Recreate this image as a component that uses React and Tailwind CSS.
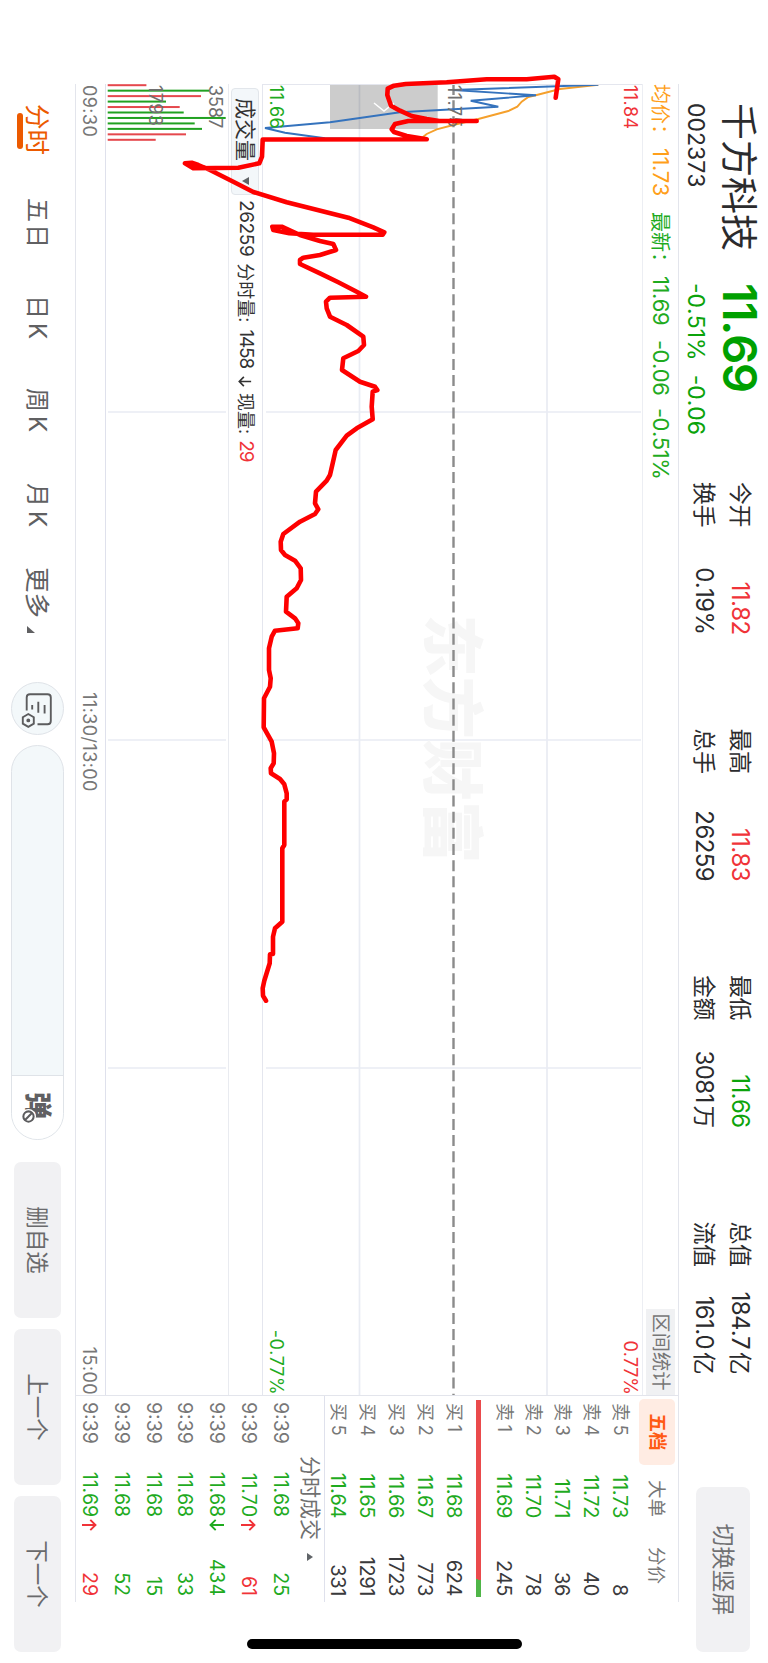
const stats = [
  [["今开", "11.82", "text-[#f03338]"], ["换手", "0.19%", ""]],
  [["最高", "11.83", "text-[#f03338]"], ["总手", "26259", ""]],
  [["最低", "11.66", "text-[#0ba30b]"], ["金额", "3081", "", "万"]],
  [["总值", "184.7", "", "亿"], ["流值", "161.0", "", "亿"]],
];

const sells = [
  ["卖 5", "11.73", 8],
  ["卖 4", "11.72", 40],
  ["卖 3", "11.71", 36],
  ["卖 2", "11.70", 78],
  ["卖 1", "11.69", 245],
];

const buys = [
  ["买 1", "11.68", 624],
  ["买 2", "11.67", 773],
  ["买 3", "11.66", 1723],
  ["买 4", "11.65", 1291],
  ["买 5", "11.64", 331],
];

const trades = [
  { price: "11.68", qty: 25 },
  { price: "11.70", arrow: "up", qty: 61, red: true },
  { price: "11.68", arrow: "down", qty: 434 },
  { price: "11.68", qty: 33 },
  { price: "11.68", qty: 15 },
  { price: "11.68", qty: 52 },
  { price: "11.69", arrow: "up", qty: 29, red: true },
];

// [height, isUp]
const volumes = [
  [38.7, true], [101.7, false], [93.3, true], [58.3, false],
  [72, true], [76, false], [118, false], [87, false],
  [94.3, false], [78.3, true], [48, true],
];

// every point is [distance from screen bottom, distance from screen left]
const priceLine = [
  [598.3, 84.7], [453.3, 90], [536, 95.3], [470.7, 100.7], [498.3, 106.7],
  [400, 112.3], [330, 122.3], [265, 128], [285, 132.7], [325, 138.3], [422, 140],
];

const avgLine = [
  [598.3, 84.7], [560, 89], [536.7, 95], [528.3, 97], [521.7, 101.7],
  [517.3, 106.7], [508.3, 111], [478.3, 119], [453.3, 125], [436.7, 129.3],
  [426.7, 134], [422.7, 137.3],
];

const sketch = [
  [555.7, 97.7], [558.3, 79.3], [554.3, 76.7], [526.7, 79.3], [486.7, 79.3],
  [446.7, 82.3], [405.7, 84], [394, 85.7], [387.7, 88.7], [387.3, 95],
  [391, 105.7], [400, 110.7], [411.7, 116], [426.7, 119], [439.3, 121],
  [476.7, 121], [408.3, 121], [395, 124], [391.7, 129.3], [394, 132],
  [406.7, 136], [426.7, 139.3], [262.7, 139.5], [262, 156.7], [259.3, 163.3],
  [238.3, 167.7], [193.3, 168.3], [185, 163.3], [191.7, 162.7], [198.3, 165],
  [210, 170], [233.3, 181.7], [253.3, 192], [286.7, 202.3], [348.3, 217.7],
  [373.3, 227.3], [384.3, 232.3], [382.7, 234.7], [313.3, 234.7], [289.3, 233.3],
  [273.3, 230], [272.3, 226.7], [281.7, 226.7], [300, 235], [320, 241],
  [333.3, 244], [336, 250], [320, 255], [303.3, 257.7], [300, 260],
  [300, 264], [320, 273.3], [338.3, 282.3], [356.7, 291.7], [366, 296.7],
  [330, 297.7], [326, 301.7], [326.7, 308.3], [330, 316.7], [346.7, 325],
  [363.3, 336.7], [364, 345], [358.3, 351], [343.3, 358.3], [342, 370],
  [360, 381.7], [375, 386.7], [377.3, 390], [372.7, 391.7], [371.7, 406.7],
  [372.7, 419.3], [356.7, 428.3], [346.7, 435.7], [335.7, 450], [332.7, 463.3],
  [330, 475], [326.7, 480.7], [316, 491.7], [315, 503.3], [318.3, 509.3],
  [315, 514], [300, 521.7], [283.3, 534], [280.7, 541.7], [281, 550],
  [285, 555], [295, 560.7], [300.7, 568.3], [301, 580], [296.7, 588.3],
  [286.7, 596.7], [286, 611.7], [295, 618.3], [298.3, 623.3], [297.7, 628.3],
  [275, 630.7], [271.7, 636.7], [269, 648.3], [269, 670], [270.7, 678.3],
  [270, 686.7], [264, 698.3], [263.7, 727.3], [271.7, 741.7], [274, 753.3],
  [273.7, 763.3], [270.7, 768.3], [271, 773.3], [280, 779], [284.3, 784.3],
  [286.7, 793.3], [286.7, 799.3], [284.3, 801.7], [284.3, 845], [282.3, 848.3],
  [282.3, 921.7], [275, 928.3], [273, 936.7], [273, 954], [270, 954.3],
  [269.7, 963.3], [264.3, 980.7], [262.7, 988.3], [263, 995.7], [266, 1000.7],
];

const toPoints = (pts) => pts.map(([v, t]) => `${t},${768 - v}`).join(" ");

const Arrow = ({ down, className }) => (
  <svg viewBox="0 0 12 16" className={className} fill="none" stroke="currentColor" strokeWidth="1.9">
    {down ? <path d="M6 1V14.5M0.8 9.3L6 14.5L11.2 9.3" /> : <path d="M6 15V1.5M0.8 6.7L6 1.5L11.2 6.7" />}
  </svg>
);

const Header = () => (
  <header className="flex h-[89px] shrink-0 pl-[103px] text-[#2b2b2d]">
    <div className="w-[180px]">
      <h1 className="mt-[11px] h-[38px] text-[37px] leading-[38px]">千方科技</h1>
      <p className="mt-[11px] text-[23px] leading-6">002373</p>
    </div>
    <div className="w-[199px] text-[#0ba30b]">
      <p className="mt-[9px] h-[38px] text-[47px] font-semibold leading-[38px] tracking-[-1.2px] text-[#00a000]">
        11.69
      </p>
      <p className="mt-[13px] flex gap-[14px] text-[23px] leading-6">
        <span>-0.51%</span>
        <span>-0.06</span>
      </p>
    </div>
    <div className="flex gap-[94px] text-[24px] tracking-[-0.6px]">
      {stats.map((col, i) => (
        <div key={i} className="flex w-[152.5px] flex-col gap-[10px] pt-[15px]">
          {col.map(([label, value, color, unit]) => (
            <div key={label} className="flex leading-[26px]">
              <span className="text-[23px]">{label}</span>
              <span className={`ml-auto ${color}`}>{value}</span>
              {unit && <span className="ml-[3px] text-[22.5px]">{unit}</span>}
            </div>
          ))}
        </div>
      ))}
    </div>
    <button className="ml-[113px] mt-[18px] h-[54px] w-[165px] rounded-[7px] bg-[#f1f1f3] pt-px text-[23px] text-[#707072]">
      切换竖屏
    </button>
  </header>
);

const PriceChart = () => (
  <div className="relative h-[380px] border-b border-l border-[#e4e6ee]">
    <svg viewBox="85 126 1310 379" className="absolute left-0 top-0 h-[379px] w-[1310px]">
      <g stroke="#e9ecf3" strokeWidth="1.7">
        <path d="M85 221H1395M85 408.5H1395" />
        <path d="M412 127V502M740 127V502M1068 127V502" />
      </g>
      <text x="614.5" y="339" fontSize="62.2" fontWeight="900" fill="#f6f6f6">东方财富</text>
      <path d="M84 314.5H1395" stroke="#8b8b8b" strokeWidth="2.4" strokeDasharray="11 5.17" />
      <rect x="84.5" y="330.3" width="44.5" height="107.7" fill="#000" fillOpacity="0.2" />
      <path d="M103 394L111 384L103 374" fill="none" stroke="#fff" strokeWidth="1.5" />
      <polyline points={toPoints(avgLine)} fill="none" stroke="#f5a02c" strokeWidth="1.9" />
      <polyline points={toPoints(priceLine)} fill="none" stroke="#3573bd" strokeWidth="1.9" />
    </svg>
    <div className="absolute inset-0 text-[18px] leading-5 tracking-[0.4px]">
      <span className="absolute left-0 top-[2px] text-[#f03338]">11.84</span>
      <span className="absolute right-0 top-[2px] tracking-normal text-[#f03338]">0.77%</span>
      <span className="absolute left-0 top-[178px] text-[#707070]">11.75</span>
      <span className="absolute bottom-[3px] left-0 text-[#1fab1f]">11.66</span>
      <span className="absolute bottom-[3px] right-0 text-[#1fab1f]">-0.77%</span>
    </div>
  </div>
);

const VolumeChart = () => (
  <>
    <div className="flex h-[34px] items-center border-b border-[#e9ebf0] text-[19px] text-[#333]">
      <div className="ml-1 flex h-7 w-[107px] items-center rounded border border-[#e2e6eb] bg-[#f3f7fa] pl-[9px] text-[21px]">
        成交量
        <svg viewBox="0 0 8 7" className="ml-[16px] h-[7px] w-2" fill="#606468">
          <path d="M0 0H8L4 7Z" />
        </svg>
      </div>
      <span className="ml-[5px] tracking-[-0.4px]">26259</span>
      <span className="ml-[7px] text-[18px]">分时量:</span>
      <span className="ml-[7px] tracking-[-1.2px]">1458</span>
      <Arrow down className="ml-[8px] h-[14px] w-[11px]" />
      <span className="ml-[6px] text-[18px]">现量:</span>
      <span className="ml-[6px] tracking-[-1px] text-[#f03338]">29</span>
    </div>
    <div className="relative h-[123px] border-b border-[#dfe1ec]">
      <svg viewBox="84 540 1311 122" className="absolute left-0 top-0 h-[122px] w-[1311px]">
        <path d="M412 542V660M740 542V660M1068 542V660" stroke="#e9ecf3" strokeWidth="1.7" />
        {volumes.map(([h, up], i) => (
          <rect
            key={i}
            x={84.2 + i * 5.46}
            y={660.3 - h}
            width="2"
            height={h}
            fill={up ? "#e5484d" : "#21a121"}
          />
        ))}
      </svg>
      <div className="absolute inset-0 text-[18px] leading-5 text-[#707070]">
        <span className="absolute left-px top-[3px]">3587</span>
        <span className="absolute left-px top-[63px] tracking-[0.4px]">1793</span>
      </div>
    </div>
  </>
);

const OrderRow = ({ row }) => (
  <div className="flex h-[29px] items-center text-[20px]">
    <span className="w-[44px] text-[18px] tracking-[-0.6px] text-[#777]">{row[0]}</span>
    <span className="w-[71px] text-right tracking-[-0.4px] text-[#1fab1f]">{row[1]}</span>
    <span className="flex-1 text-right tracking-[-0.4px] text-[#3a3a3c]">{row[2]}</span>
  </div>
);

const SidePanel = () => (
  <aside className="flex-1">
    <div className="flex h-[43px] pl-[3px] pt-[3px] text-[18.5px] text-[#777]">
      <span className="flex h-9 w-[66px] items-center justify-center rounded-[5px] bg-[#ffece3] font-bold text-[#ff5a14]">
        五档
      </span>
      <span className="ml-[15px] leading-9">大单</span>
      <span className="ml-[30px] leading-9">分价</span>
    </div>
    <div className="pl-[7px] pr-[6px]">
      {sells.map((row) => (
        <OrderRow key={row[0]} row={row} />
      ))}
    </div>
    <div className="mb-[7px] ml-[4px] mt-[9px] h-[5px] w-[197px] bg-linear-100 from-[#ea4a4c] from-91% to-[#4fb548] to-91%" />
    <div className="h-[145px] border-b border-[#dfe1ec] pl-[7px] pr-[6px]">
      {buys.map((row) => (
        <OrderRow key={row[0]} row={row} />
      ))}
    </div>
    <div className="flex h-[28px] items-center pl-[60px] text-[21px] text-[#707070]">
      分时成交
      <svg viewBox="0 0 8 6" className="ml-[13px] h-[6px] w-2" fill="#606468">
        <path d="M0 6H8L4 0Z" />
      </svg>
    </div>
    <div className="pl-[6px] pr-[6px]">
      {trades.map((t, i) => (
        <div key={i} className="flex h-[31.8px] items-center text-[19.5px]">
          <span className="w-[50px] text-[#777]">9:39</span>
          <span className="w-[65px] text-right tracking-[-0.1px] text-[#1fab1f]">{t.price}</span>
          <span className={`ml-[2px] w-3 ${t.arrow === "up" ? "text-[#f03338]" : "text-[#1fab1f]"}`}>
            {t.arrow && <Arrow down={t.arrow === "down"} className="h-4 w-3" />}
          </span>
          <span className={`flex-1 text-right ${t.red ? "text-[#f03338]" : "text-[#1fab1f]"}`}>{t.qty}</span>
        </div>
      ))}
    </div>
  </aside>
);

const Footer = () => (
  <footer className="flex flex-1 items-start pl-[104px] pt-[11px] text-[24px] text-[#606062]">
    <nav className="flex h-[53px] w-[578px] items-center pt-px">
      <span className="relative w-[94px] text-[25.5px] text-[#ec5a00]">
        分时
        <i className="absolute -bottom-[0.5px] left-[9px] h-[5.5px] w-9 rounded-full bg-[#ec5a00]" />
      </span>
      <span className="w-[97px] tracking-[2px]">五日</span>
      <span className="w-[93px] tracking-[4px]">日K</span>
      <span className="w-[95px] tracking-[4px]">周K</span>
      <span className="w-[84px] tracking-[4px]">月K</span>
      <span className="flex items-end gap-[8px] text-[25.5px]">
        更多
        <svg viewBox="0 0 7 8" className="mb-[9px] h-2 w-[7px]" fill="#606062">
          <path d="M7 0V8H0Z" />
        </svg>
      </span>
    </nav>
    <div className="mt-[-0.5px] h-[53px] w-[53px] shrink-0 rounded-full border border-[#dfe3e8] bg-[#f3f8fa]">
      <svg viewBox="683 705 51 51" className="h-[51px] w-[51px]" fill="none" stroke="#5c5c5e" strokeWidth="1.9">
        <path d="M710.5 741.3H697.5Q694.3 741.3 694.3 738V720.5Q694.3 717.2 697.5 717.2H721Q724.3 717.2 724.3 720.5V730.5" />
        <path d="M705 723.4H713.5M701.7 729.7H712.7M705 735.8H709.5" />
        <path d="M717.2 734.2H723.6L726.8 739.7L723.6 745.2H717.2L714 739.7Z" />
        <circle cx="720.4" cy="739.7" r="1" fill="#5c5c5e" />
      </svg>
    </div>
    <div className="ml-[10px] flex h-[53px] w-[395px] shrink-0 overflow-hidden rounded-full border border-[#dfe3e8] bg-[#f3f8fa]">
      <div className="ml-auto flex w-[64px] items-center border-l border-[#dfe3e8] bg-white pl-4">
        <span className="relative text-[27px] font-black leading-none">
          弹
          <svg viewBox="0 0 14 14" className="absolute -bottom-[3px] left-[17px] h-[15px] w-[15px]">
            <circle cx="7" cy="7" r="7" fill="#fff" />
            <circle cx="7" cy="7" r="4.8" fill="#fff" stroke="#5c5c5e" strokeWidth="1.9" />
            <path d="M3.8 3.8L10.2 10.2" stroke="#5c5c5e" strokeWidth="1.9" />
          </svg>
        </span>
      </div>
    </div>
    <div className="ml-[22px] mt-[3px] flex gap-[11px] text-[22.5px] text-[#6a6a6c]">
      <button className="h-[47px] w-[156px] rounded-[7px] bg-[#f1f1f3]">删自选</button>
      <button className="h-[47px] w-[156px] rounded-[7px] bg-[#f1f1f3]">上一个</button>
      <button className="h-[47px] w-[156px] rounded-[7px] bg-[#f1f1f3]">下一个</button>
    </div>
  </footer>
);

export default function App() {
  return (
    <div className="h-[1663px] w-[768px] overflow-hidden bg-white">
      {/* landscape screen held in a portrait frame */}
      <div className="relative flex h-[768px] w-[1663px] origin-top-left translate-x-[768px] rotate-90 flex-col bg-white font-['Inter','Noto_Sans_CJK_SC',sans-serif] [font-kerning:none]">
        <Header />
        <main className="ml-[84px] flex h-[604px] w-[1518px] shrink-0 border-y border-[#e3e5ec]">
          <section className="w-[1312px] border-r border-[#e3e5ec]">
            <div className="flex h-[36px] items-center border-b border-[#eceef3] text-[22px] tracking-[-0.5px] text-[#1fab1f]">
              <span className="w-[64px] text-[20px] tracking-normal text-[#ff9f1a]">均价：</span>
              <span className="w-[64px] text-[#ff9f1a]">11.73</span>
              <span className="w-[64px] text-[20px] tracking-normal">最新：</span>
              <span className="w-[64px]">11.69</span>
              <span className="w-[68px]">-0.06</span>
              <span>-0.51%</span>
              <span className="ml-auto flex h-[29px] w-[86px] items-center justify-center bg-[#f0f1f3] text-[19.3px] tracking-normal text-[#777]">
                区间统计
              </span>
            </div>
            <PriceChart />
            <VolumeChart />
            <div className="flex h-[29px] items-center justify-between pl-px pt-[2px] text-[18px] tracking-[0.4px] text-[#777]">
              <span>09:30</span>
              <span>11:30/13:00</span>
              <span>15:00</span>
            </div>
          </section>
          <SidePanel />
        </main>
        <Footer />
        {/* hand drawn trend */}
        <svg viewBox="0 0 1663 768" className="pointer-events-none absolute inset-0 h-[768px] w-[1663px]">
          <polyline
            points={toPoints(sketch)}
            fill="none"
            stroke="#fe0000"
            strokeWidth="4.6"
            strokeLinecap="round"
            strokeLinejoin="round"
          />
        </svg>
        <div className="absolute left-[1639px] top-[246px] h-[275px] w-[10px] rounded-full bg-black" />
      </div>
    </div>
  );
}
